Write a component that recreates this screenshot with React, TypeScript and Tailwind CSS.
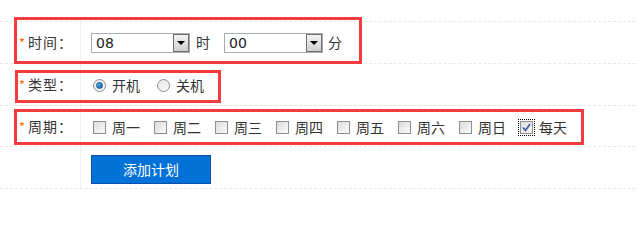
import React from 'react';

const font = { fontFamily: '"Noto Sans CJK SC", "Liberation Sans", sans-serif' };

function Label({ text }: { text: string }) {
  return (
    <div className="w-[81px] shrink-0 border-r border-[#efefef] flex items-center pl-[19px] text-[14px] text-[#333]">
      <span className="text-[#ff6600] text-[13px] mr-[3px] leading-none">*</span>
      <span className="tracking-[1px]">{text}</span>
    </div>
  );
}

function Select({ value }: { value: string }) {
  return (
    <div className="w-[99px] h-[20px] border border-[#a5acb2] bg-white flex items-stretch">
      <span
        className="flex-1 pl-[4px] text-[14px] leading-[18px] text-[#222]"
        style={{ fontFamily: 'Tahoma, "DejaVu Sans", sans-serif' }}
      >
        {value}
      </span>
      <span className="w-[16px] border border-[#6f6f6f] bg-gradient-to-b from-[#f4f4f4] to-[#cfcfcf] flex items-center justify-center">
        <span className="w-0 h-0 border-l-[4px] border-r-[4px] border-t-[4px] border-l-transparent border-r-transparent border-t-black" />
      </span>
    </div>
  );
}

function Radio({ checked, text }: { checked?: boolean; text: string }) {
  return (
    <div className="flex items-center mr-[17px]">
      <span className="w-[13px] h-[13px] rounded-full border border-[#8e8f8f] bg-gradient-to-br from-[#e8e8e8] to-[#f8f8f8] flex items-center justify-center">
        {checked && (
          <span className="w-[7px] h-[7px] rounded-full bg-gradient-to-br from-[#5cc3f0] to-[#0b5ea8] border border-[#17548c]" />
        )}
      </span>
      <span className="ml-[6px] text-[14px] text-[#333]">{text}</span>
    </div>
  );
}

function Check({ checked, text }: { checked?: boolean; text: string }) {
  return (
    <div className="flex items-center w-[61px] shrink-0">
      <span className={checked ? 'outline-1 outline-dotted outline-black outline-offset-[1px] flex' : 'flex'}>
        <span className="w-[13px] h-[13px] border border-[#8f8f8f] bg-gradient-to-br from-[#dcdcdc] to-[#fbfbfb] flex items-center justify-center">
          {checked && (
            <svg width="9" height="9" viewBox="0 0 9 9">
              <path d="M1 4.5 L3.5 7.5 L8 1" fill="none" stroke="#4a5fb0" strokeWidth="1.8" />
            </svg>
          )}
        </span>
      </span>
      <span className="ml-[6px] text-[14px] text-[#333]">{text}</span>
    </div>
  );
}

function Box({ className }: { className: string }) {
  return <div className={`absolute border-[3px] border-[#f43b3d] pointer-events-none ${className}`} />;
}

export default function App() {
  const days = ['周一', '周二', '周三', '周四', '周五', '周六', '周日'];
  return (
    <div className="w-[636px] h-[200px] bg-white pt-[21px] relative overflow-hidden" style={font}>
      <div className="border-t border-dashed border-[#e8e8e8]">
        {/* 时间 */}
        <div className="flex h-[42px] border-b border-dashed border-[#e8e8e8]">
          <Label text="时间：" />
          <div className="flex items-center pl-[10px] text-[14px] text-[#333]">
            <Select value="08" />
            <span className="ml-[6px] mr-[14px]">时</span>
            <Select value="00" />
            <span className="ml-[5px]">分</span>
          </div>
        </div>

        {/* 类型 */}
        <div className="flex h-[42px] border-b border-dashed border-[#e8e8e8]">
          <Label text="类型：" />
          <div className="flex items-center pl-[12px] pt-[2px]">
            <Radio checked text="开机" />
            <Radio text="关机" />
          </div>
        </div>

        {/* 周期 */}
        <div className="flex h-[41px] border-b border-dashed border-[#e8e8e8]">
          <Label text="周期：" />
          <div className="flex items-center pl-[12px] pt-[2px]">
            {days.map((d) => (
              <Check key={d} text={d} />
            ))}
            <Check checked text="每天" />
          </div>
        </div>

        {/* 按钮 */}
        <div className="flex h-[42px] border-b border-dashed border-[#e8e8e8]">
          <div className="w-[81px] shrink-0 border-r border-[#efefef]" />
          <div className="flex items-center pl-[10px] pt-[4px]">
            <button className="w-[120px] h-[29px] bg-[#0271d8] border border-[#0a4fa8] text-white text-[14px]">
              添加计划
            </button>
          </div>
        </div>
      </div>

      <Box className="left-[14px] top-[17px] w-[348px] h-[47px]" />
      <Box className="left-[15px] top-[70px] w-[206px] h-[33px]" />
      <Box className="left-[14px] top-[109px] w-[570px] h-[36px]" />
    </div>
  );
}
